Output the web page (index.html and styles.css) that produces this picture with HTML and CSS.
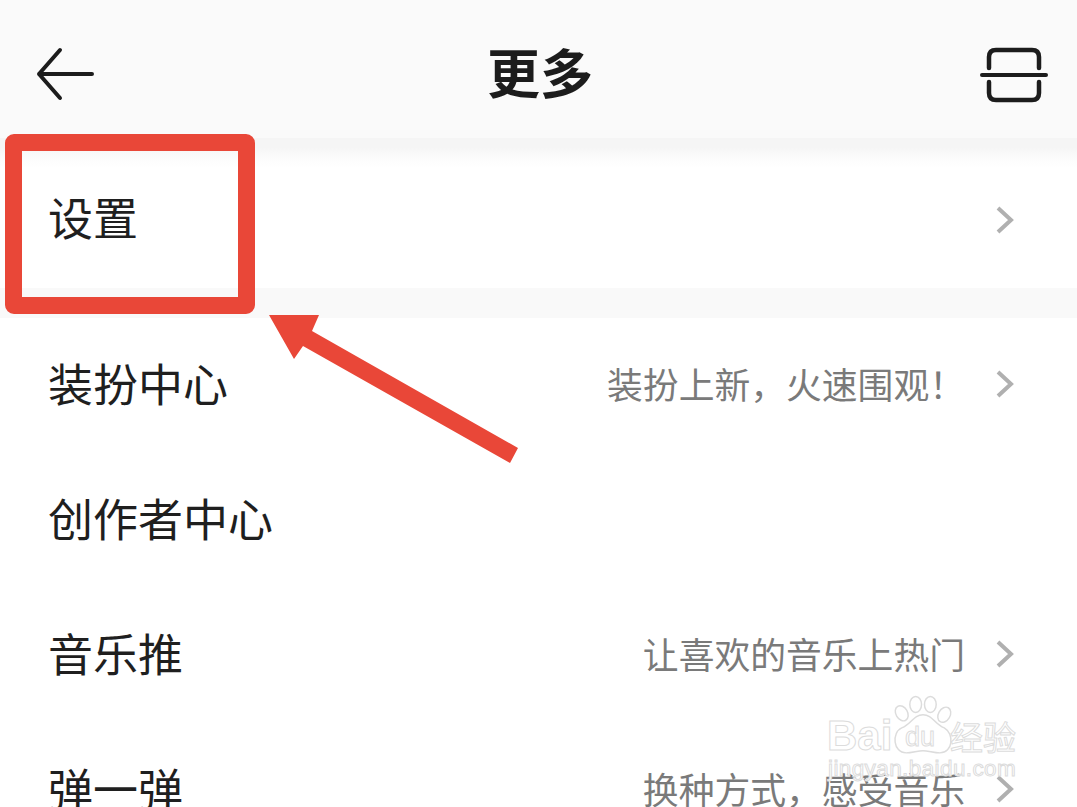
FILE: index.html
```html
<!DOCTYPE html>
<html lang="zh">
<head>
<meta charset="utf-8">
<title>更多</title>
<link rel="stylesheet" href="styles.css">
</head>
<body>
<div class="screen">
  <header class="header">
    <svg class="icon-back" width="60" height="60" viewBox="0 0 60 60"><path d="M24 4 L3 28 L24 52 M3 28 H56" fill="none" stroke="#1c1c1c" stroke-width="4" stroke-linecap="round" stroke-linejoin="round"/></svg>
    <h1 class="title">更多</h1>
    <svg class="icon-scan" width="70" height="60" viewBox="0 0 70 60"><path d="M9 22 V11 Q9 4 16 4 H52 Q59 4 59 11 V22 M9 36 V47 Q9 54 16 54 H52 Q59 54 59 47 V36" fill="none" stroke="#1c1c1c" stroke-width="4.5" stroke-linecap="round"/><path d="M2 29 H66" stroke="#1c1c1c" stroke-width="4" stroke-linecap="round"/></svg>
  </header>
  <div class="band-top"></div>
  <div class="row row-first"><span class="label">设置</span><svg class="chev" width="20" height="30" viewBox="0 0 20 30"><path d="M3 3 L16 15 L3 27" fill="none" stroke="#b0b0b0" stroke-width="4"/></svg></div>
  <div class="band"></div>
  <div class="row"><span class="label">装扮中心</span><span class="sub">装扮上新，火速围观！</span><svg class="chev" width="20" height="30" viewBox="0 0 20 30"><path d="M3 3 L16 15 L3 27" fill="none" stroke="#b0b0b0" stroke-width="4"/></svg></div>
  <div class="row"><span class="label">创作者中心</span></div>
  <div class="row"><span class="label">音乐推</span><span class="sub">让喜欢的音乐上热门</span><svg class="chev" width="20" height="30" viewBox="0 0 20 30"><path d="M3 3 L16 15 L3 27" fill="none" stroke="#b0b0b0" stroke-width="4"/></svg></div>
  <div class="row"><span class="label">弹一弹</span><span class="sub">换种方式，感受音乐</span><svg class="chev" width="20" height="30" viewBox="0 0 20 30"><path d="M3 3 L16 15 L3 27" fill="none" stroke="#b0b0b0" stroke-width="4"/></svg></div>

  <div class="frame"></div>
  <svg class="arrow" width="260" height="160" viewBox="0 0 260 160"><polygon points="9,5 59,5 52,21 258,138 250,153 43,36 34,49" fill="#e94738"/></svg>

  <div class="mark">
    <svg class="paw" width="66" height="66" viewBox="0 0 90 80" fill="#fff" stroke="#dcdcdc" stroke-width="2">
      <ellipse cx="16" cy="24" rx="8" ry="11" transform="rotate(-30 16 24)"/>
      <ellipse cx="35" cy="12" rx="8" ry="11"/>
      <ellipse cx="55" cy="12" rx="8" ry="11"/>
      <ellipse cx="74" cy="26" rx="8" ry="11" transform="rotate(30 74 26)"/>
      <path d="M45 26 C32 26 30 38 16 44 C2 50 4 78 22 78 C30 78 38 75 45 75 C52 75 60 78 68 78 C86 78 88 52 74 44 C60 38 58 26 45 26 Z"/>
    </svg>
    <span class="mark-bai">Bai</span><span class="mark-du">du</span><span class="mark-jy">经验</span>
    <span class="mark-url">jingyan.baidu.com</span>
  </div>
</div>
</body>
</html>
```
FILE: styles.css
```css
* { box-sizing: border-box; }
html, body { margin: 0; padding: 0; background: #fff; }
.screen {
  position: relative;
  width: 1077px;
  height: 807px;
  overflow: hidden;
  background: #fff;
  font-family: "Noto Sans CJK SC", "Noto Sans", sans-serif;
  color: #1c1c1c;
}
.header {
  height: 138px;
  background: #fafafa;
  display: flex;
  align-items: center;
  justify-content: space-between;
  padding: 0 27px 0 36px;
  position: relative;
}
.icon-back { display: block; margin-top: 14px; }
.icon-scan { display: block; margin-top: 14px; }
.title {
  margin: 0;
  font-size: 53px;
  font-weight: 700;
  line-height: 60px;
  position: absolute;
  left: 487px;
  top: 41px;
}
.band-top { height: 30px; background: linear-gradient(#f5f5f5, #f5f5f5 30%, #fcfcfc 70%, #fff); }
.band { height: 30px; background: #f9f9f9; }
.row {
  height: 135px;
  background: #fff;
  display: flex;
  align-items: center;
  padding: 0 62px 5px 48px;
  gap: 30px;
}
.row-first { height: 120px; padding-bottom: 16px; }
.row-first .label { margin-bottom: 6px; }
.row-first .chev { margin-top: 0; }
.label { font-size: 45px; line-height: 60px; margin-right: auto; color: #1f1f1f; }
.sub { font-size: 35.8px; line-height: 50px; color: #7a7a7a; }
.chev { display: block; flex: none; margin-top: 2px; }
.frame {
  position: absolute;
  left: 5px;
  top: 134px;
  width: 250px;
  height: 180px;
  border: 17px solid #e94738;
  border-radius: 9px;
}
.arrow { position: absolute; left: 260px; top: 310px; }
.mark { position: absolute; left: 820px; top: 685px; width: 257px; height: 100px; }
.paw { position: absolute; left: 70px; top: 7px; }
.mark-bai, .mark-du, .mark-jy, .mark-url {
  position: absolute;
  color: #fff;
  -webkit-text-stroke: 1px #dcdcdc;
  font-family: "Liberation Sans", sans-serif;
}
.mark-bai { left: 7px; top: 26px; font-size: 42px; line-height: 50px; font-weight: 700; }
.mark-du { left: 85px; top: 37px; font-size: 27px; line-height: 30px; }
.mark-jy { left: 130px; top: 29px; font-size: 33px; line-height: 44px; font-family: "Noto Sans CJK SC", sans-serif; }
.mark-url { left: 8px; top: 71px; font-size: 22.5px; line-height: 26px; letter-spacing: 0.4px; }
```
